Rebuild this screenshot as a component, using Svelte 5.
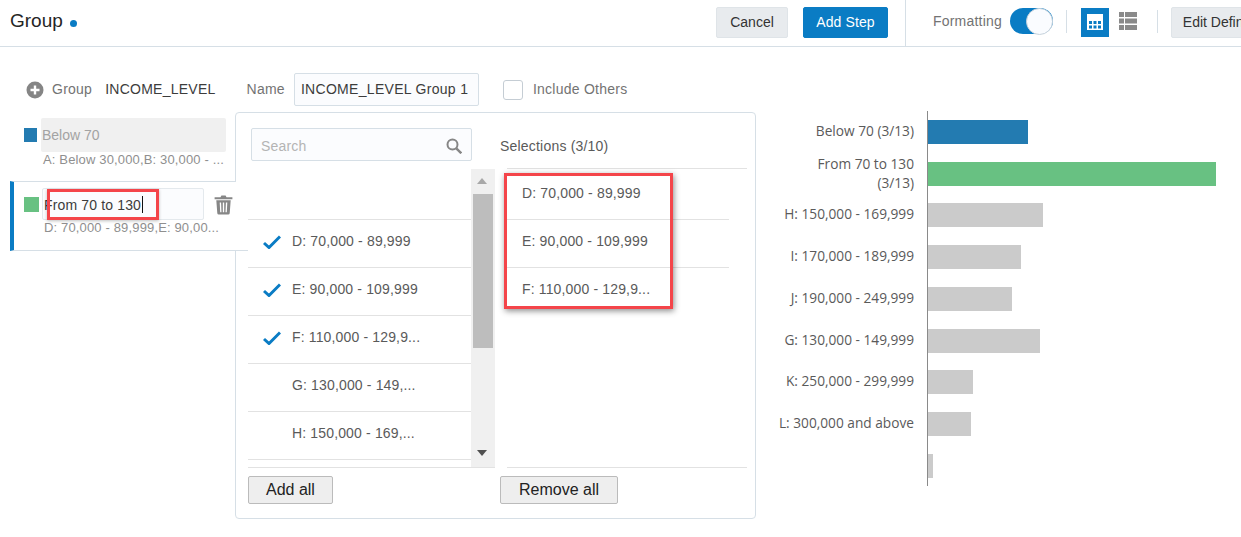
<script>
  const available = [
    { label: "", checked: false },
    { label: "D: 70,000 - 89,999", checked: true },
    { label: "E: 90,000 - 109,999", checked: true },
    { label: "F: 110,000 - 129,9...", checked: true },
    { label: "G: 130,000 - 149,...", checked: false },
    { label: "H: 150,000 - 169,...", checked: false },
    { label: "", checked: false }
  ];

  const selected = ["D: 70,000 - 89,999", "E: 90,000 - 109,999", "F: 110,000 - 129,9..."];

  // widths are pixels from the axis
  const bars = [
    { label: "Below 70 (3/13)", width: 100, color: "#237bb1" },
    { label: "From 70 to 130 (3/13)", width: 288, color: "#68c182", wrap: true },
    { label: "H: 150,000 - 169,999", width: 115, color: "#cbcbcb" },
    { label: "I: 170,000 - 189,999", width: 93, color: "#cbcbcb" },
    { label: "J: 190,000 - 249,999", width: 84, color: "#cbcbcb" },
    { label: "G: 130,000 - 149,999", width: 112, color: "#cbcbcb" },
    { label: "K: 250,000 - 299,999", width: 45, color: "#cbcbcb" },
    { label: "L: 300,000 and above", width: 43, color: "#cbcbcb" },
    { label: "", width: 5, color: "#cbcbcb" }
  ];
</script>

<div class="page">
  <header class="topbar">
    <div class="title">Group <span class="dot"></span></div>
    <button class="btn cancel">Cancel</button>
    <button class="btn primary">Add Step</button>
    <div class="divider"></div>
    <span class="fmt">Formatting</span>
    <div class="toggle"><span class="knob"></span></div>
    <div class="sep first"></div>
    <div class="view active">
      <svg width="18" height="18" viewBox="0 0 18 18">
        <rect x="1" y="1" width="16" height="16" fill="#fff" />
        <rect x="3" y="8" width="3" height="3" fill="#0a7cc4" />
        <rect x="7.5" y="8" width="3" height="3" fill="#0a7cc4" />
        <rect x="12" y="8" width="3" height="3" fill="#0a7cc4" />
        <rect x="3" y="12.5" width="3" height="3" fill="#0a7cc4" />
        <rect x="7.5" y="12.5" width="3" height="3" fill="#0a7cc4" />
        <rect x="12" y="12.5" width="3" height="3" fill="#0a7cc4" />
      </svg>
    </div>
    <div class="view list">
      <svg width="18" height="18" viewBox="0 0 18 18" fill="#8a8a8a">
        <rect x="0" y="0" width="5" height="5" />
        <rect x="6" y="0" width="12" height="5" />
        <rect x="0" y="6.5" width="5" height="5" />
        <rect x="6" y="6.5" width="12" height="5" />
        <rect x="0" y="13" width="5" height="5" />
        <rect x="6" y="13" width="12" height="5" />
      </svg>
    </div>
    <div class="sep second"></div>
    <button class="btn edit">Edit Definition</button>
  </header>

  <div class="content">
    <section class="editor">
      <div class="form-row">
        <svg class="plus" width="18" height="18" viewBox="0 0 18 18">
          <circle cx="9" cy="9" r="8.5" fill="#858585" />
          <path d="M9 4.5v9M4.5 9h9" stroke="#fff" stroke-width="2.4" />
        </svg>
        <span class="muted group-label">Group</span>
        <span class="column-name">INCOME_LEVEL</span>
        <span class="muted name-label">Name</span>
        <div class="name-input">INCOME_LEVEL Group 1</div>
        <span class="checkbox"></span>
        <span class="muted">Include Others</span>
      </div>

      <div class="group-item">
        <span class="swatch blue"></span>
        <div class="group-text">
          <div class="group-name">Below 70</div>
          <div class="group-sub">A: Below 30,000,B: 30,000 - ...</div>
        </div>
      </div>

      <div class="group-item current">
        <span class="swatch green"></span>
        <div class="group-text">
          <div class="group-edit">From 70 to 130<span class="caret"></span></div>
          <div class="group-sub">D: 70,000 - 89,999,E: 90,00...</div>
        </div>
        <svg class="trash" width="19" height="20" viewBox="0 0 19 20" fill="#868686">
          <path d="M6.5 2.2 7.4 .6h4.2l.9 1.6H18.400v2H.6v-2z" />
          <path fill-rule="evenodd" d="M2.300 5.200h14.400l-1 13a1.500 1.500 0 0 1-1.500 1.300H4.800a1.500 1.500 0 0 1-1.500-1.300zM5.700 7.500l.5 9.800h1.300l-.4-9.800zM8.800 7.500v9.800h1.400V7.500zM11.900 7.500l-.4 9.800h1.300l.5-9.800z" />
        </svg>
        <span class="mark mark-name"></span>
      </div>

      <div class="popup">
        <div class="avail">
          <div class="search">
            <span>Search</span>
            <svg width="16" height="16" viewBox="0 0 16 16" fill="none" stroke="#868686" stroke-width="2">
              <circle cx="6.500" cy="6.500" r="5" />
              <path d="m10.300 10.300 5 5" stroke-width="2.400" />
            </svg>
          </div>
          <div class="listbox">
            <ul class="options">
              {#each available as opt}
                <li>
                  {#if opt.checked}
                    <svg class="check" width="18" height="14" viewBox="0 0 18 14">
                      <path d="M1 8l5 4.500L17 1.500" fill="none" stroke="#0a7cc4" stroke-width="3" />
                    </svg>
                  {/if}
                  <span class="opt-text">{opt.label}</span>
                </li>
              {/each}
            </ul>
            <div class="scrollbar">
              <span class="arrow up"></span>
              <span class="thumb"></span>
              <span class="arrow down"></span>
            </div>
          </div>
          <button class="btn-plain">Add all</button>
        </div>

        <div class="chosen">
          <div class="chosen-title">Selections (3/10)</div>
          <div class="chosen-list">
            <ul>
              {#each selected as s}
                <li>{s}</li>
              {/each}
            </ul>
            <span class="mark mark-list"></span>
          </div>
          <button class="btn-plain">Remove all</button>
        </div>
      </div>
    </section>

    <section class="chart">
      {#each bars as bar}
        <div class="row">
          <div class="label" class:wrap={bar.wrap}>{bar.label}</div>
          <div class="bar" style="width: {bar.width}px; background: {bar.color}"></div>
        </div>
      {/each}
    </section>
  </div>
</div>

<style>
  :global(body) {
    margin: 0;
    background: #fff;
  }

  .page {
    width: 1241px;
    height: 537px;
    overflow: hidden;
    font-family: "Liberation Sans", Arial, sans-serif;
    font-size: 14px;
    color: #333;
  }

  ul {
    list-style: none;
    margin: 0;
    padding: 0;
  }

  /* --- top bar --- */
  .topbar {
    display: flex;
    align-items: center;
    box-sizing: border-box;
    height: 47px;
    padding: 0 0 2px 10px;
    border-bottom: 1px solid #d6dfe6;
    white-space: nowrap;
  }

  .topbar > * {
    flex-shrink: 0;
  }

  .title {
    flex: 0 0 706px;
    font-size: 19px;
    color: #252525;
    margin-bottom: 2px;
  }

  .dot {
    display: inline-block;
    width: 7px;
    height: 7px;
    margin-left: 2px;
    border-radius: 50%;
    background: #0a7cc4;
  }

  .btn {
    box-sizing: border-box;
    height: 31px;
    border: 1px solid #dfe4e8;
    border-radius: 2px;
    background: #e8ebee;
    color: #333;
    font: 14px "Liberation Sans", Arial, sans-serif;
    padding: 0;
  }

  .cancel {
    width: 72px;
  }

  .primary {
    width: 85px;
    margin-left: 15px;
    background: #0a7cc4;
    border-color: #0a7cc4;
    color: #fff;
    letter-spacing: 0.1px;
  }

  .divider {
    align-self: stretch;
    width: 1px;
    margin: 0 27px -2px 17px;
    background: #d6dfe6;
  }

  .fmt {
    width: 68px;
    margin-bottom: 2px;
    color: #737373;
    letter-spacing: 0.2px;
  }

  .toggle {
    position: relative;
    width: 43px;
    height: 26px;
    margin: 0 0 2px 9px;
    border-radius: 13px;
    background: #0a7cc4;
  }

  .knob {
    position: absolute;
    right: 0;
    top: 0;
    box-sizing: border-box;
    width: 27px;
    height: 27px;
    border-radius: 50%;
    background: #fafcff;
    border: 1px solid #c8d3dc;
  }

  .sep {
    width: 1px;
    height: 23px;
    margin-bottom: 2px;
    background: #d6dfe6;
  }

  .sep.first {
    margin-left: 13px;
    margin-right: 14px;
  }

  .sep.second {
    margin-left: 20px;
    margin-right: 13px;
  }

  .view {
    display: flex;
    align-items: center;
    justify-content: center;
    width: 28px;
    height: 29px;
  }

  .view.list {
    width: 18px;
    margin-left: 10px;
    margin-bottom: 2px;
  }

  .view.active {
    background: #0a7cc4;
  }

  .edit {
    width: 110px;
  }

  /* --- main area --- */
  .content {
    display: flex;
  }

  .editor {
    position: relative;
    flex: 0 0 770px;
  }

  .form-row {
    display: flex;
    align-items: center;
    height: 33px;
    margin-top: 26px;
    padding-left: 26px;
    white-space: nowrap;
    letter-spacing: 0.25px;
  }

  .muted {
    margin-bottom: 1px;
    color: #737373;
  }

  .group-label {
    margin-left: 8px;
  }

  .column-name {
    margin: 0 0 1px 13px;
    color: #3c3c3c;
  }

  .name-label {
    margin-left: 31px;
  }

  .name-input {
    box-sizing: border-box;
    width: 185px;
    height: 33px;
    margin-left: 9px;
    padding-left: 6px;
    line-height: 31px;
    border: 1px solid #d6dfe6;
    border-radius: 2px;
    background: #fbfcfe;
    color: #3c3c3c;
    letter-spacing: 0.3px;
  }

  .checkbox {
    box-sizing: border-box;
    width: 20px;
    height: 20px;
    margin: 0 10px 0 24px;
    border: 1px solid #c5cdd4;
    border-radius: 3px;
  }

  .group-item {
    display: flex;
    align-items: flex-start;
    margin: 12px 0 0 24px;
    width: 202px;
    height: 51px;
  }

  .swatch {
    flex-shrink: 0;
    width: 13px;
    height: 14px;
    margin-top: 10px;
  }

  .swatch.blue {
    background: #237bb1;
  }

  .swatch.green {
    width: 15px;
    height: 15px;
    margin-top: 15px;
    background: #68c182;
  }

  .group-text {
    margin-left: 4px;
    width: 185px;
  }

  .group-name {
    height: 34px;
    line-height: 34px;
    padding-left: 1px;
    border-radius: 2px;
    background: #f0f0f0;
    color: #a3a3a3;
  }

  .group-sub {
    margin-top: 1px;
    padding-left: 2px;
    font-size: 13px;
    line-height: 14px;
    letter-spacing: 0.15px;
    white-space: nowrap;
    color: #8f8f8f;
  }

  .group-item.current {
    position: relative;
    z-index: 2;
    box-sizing: border-box;
    width: 226px;
    height: 70px;
    margin: 12px 0 0 10px;
    padding-left: 10px;
    border-top: 1px solid #d6dfe6;
    border-bottom: 1px solid #d6dfe6;
    border-left: 4px solid #0a7cc4;
    background: #fff;
  }

  /* lower rule runs on past the popup's edge */
  .group-item.current::after {
    content: "";
    position: absolute;
    left: 100%;
    bottom: -1px;
    width: 12px;
    height: 1px;
    background: #d6dfe6;
  }

  .current .group-text {
    margin-left: 3px;
    width: 162px;
    padding-top: 6px;
  }

  .group-edit {
    box-sizing: border-box;
    height: 32px;
    line-height: 32px;
    padding-left: 1px;
    border: 1px solid #e4e9ed;
    border-radius: 2px;
    background: #fbfcfe;
    color: #3c3c3c;
    letter-spacing: 0.15px;
  }

  .caret {
    display: inline-block;
    width: 1px;
    height: 17px;
    margin-left: 1px;
    background: #111;
    vertical-align: -3px;
  }

  .trash {
    margin: 13px 0 0 10px;
  }

  .mark {
    position: absolute;
    box-sizing: border-box;
    border: 3px solid #f4454a;
    pointer-events: none;
  }

  .mark-name {
    left: 33px;
    top: 7px;
    width: 112px;
    height: 31px;
    box-shadow: 0 1px 3px rgba(0, 0, 0, 0.25);
  }

  .mark-list {
    left: -3px;
    top: 4px;
    width: 169px;
    height: 136px;
    box-shadow: 1px 2px 6px rgba(0, 0, 0, 0.45);
  }

  /* --- popup --- */
  .popup {
    position: absolute;
    left: 235px;
    top: 65px;
    z-index: 1;
    box-sizing: border-box;
    display: flex;
    width: 521px;
    height: 407px;
    padding-left: 12px;
    border: 1px solid #d6dfe6;
    border-radius: 4px;
    background: #fff;
  }

  .avail {
    width: 247px;
    padding-top: 15px;
  }

  .search {
    box-sizing: border-box;
    display: flex;
    align-items: center;
    justify-content: space-between;
    width: 221px;
    height: 33px;
    margin: 0 0 8px 3px;
    padding: 2px 9px 0 9px;
    border: 1px solid #d6dfe6;
    border-radius: 2px;
    background: #fbfcfe;
    color: #b4b4b4;
    letter-spacing: 0.2px;
  }

  .listbox {
    display: flex;
    height: 298px;
    overflow: hidden;
    border-bottom: 1px solid #e2e2e2;
  }

  .options {
    flex: 0 0 223px;
    padding-top: 3px;
  }

  .options li {
    position: relative;
    box-sizing: border-box;
    height: 48px;
    padding-left: 44px;
    line-height: 42px;
    border-bottom: 1px solid #e2e2e2;
    color: #5a5a5a;
    letter-spacing: 0.15px;
    white-space: nowrap;
  }

  .check {
    position: absolute;
    left: 15px;
    top: 15px;
  }

  .scrollbar {
    position: relative;
    flex: 0 0 24px;
    background: #f0f0f0;
  }

  .thumb {
    position: absolute;
    left: 2px;
    top: 25px;
    width: 20px;
    height: 154px;
    background: #bdbdbd;
  }

  .arrow {
    position: absolute;
    left: 6px;
    width: 0;
    height: 0;
    border-left: 5.500px solid transparent;
    border-right: 5.500px solid transparent;
  }

  .arrow.up {
    top: 9px;
    border-bottom: 6px solid #a8a8a8;
  }

  .arrow.down {
    bottom: 11px;
    border-top: 6px solid #505050;
  }

  .btn-plain {
    box-sizing: border-box;
    display: block;
    height: 28px;
    margin-top: 8px;
    padding: 0 17px;
    border: 1px solid #bbb;
    border-radius: 2px;
    background: #eee;
    color: #222;
    font: 16px "Liberation Sans", Arial, sans-serif;
  }

  .chosen {
    width: 247px;
    margin-left: 5px;
    padding-top: 15px;
  }

  .chosen-title {
    height: 40px;
    line-height: 36px;
    color: #5a5a5a;
    letter-spacing: 0.2px;
  }

  .chosen-list {
    position: relative;
    box-sizing: border-box;
    height: 300px;
    margin-left: 7px;
    padding-top: 3px;
    border-top: 1px solid #e2e2e2;
    border-bottom: 1px solid #e2e2e2;
  }

  .chosen-list li {
    box-sizing: border-box;
    width: 222px;
    height: 48px;
    padding-left: 15px;
    line-height: 42px;
    border-bottom: 1px solid #e2e2e2;
    color: #5a5a5a;
    letter-spacing: 0.15px;
  }

  .chosen-list li:last-child {
    border-bottom: none;
  }

  .chosen .btn-plain {
    padding: 0 18px;
  }

  /* --- bar chart --- */
  .chart {
    position: relative;
    margin-top: 64px;
    height: 375px;
    padding-top: 0;
    font-family: "Open Sans", sans-serif;
    font-size: 13.700px;
    color: #5a5a5a;
  }

  .chart::before {
    content: "";
    position: absolute;
    left: 157px;
    top: 0;
    width: 1px;
    height: 375px;
    background: #8a8a8a;
  }

  .row {
    display: flex;
    align-items: center;
    height: 41.750px;
  }

  .label {
    box-sizing: border-box;
    flex: 0 0 158px;
    padding: 0 14px 3px 6px;
    text-align: right;
    line-height: 19px;
  }

  .label.wrap {
    padding-left: 30px;
    padding-bottom: 2px;
  }

  .bar {
    height: 24px;
  }
</style>
